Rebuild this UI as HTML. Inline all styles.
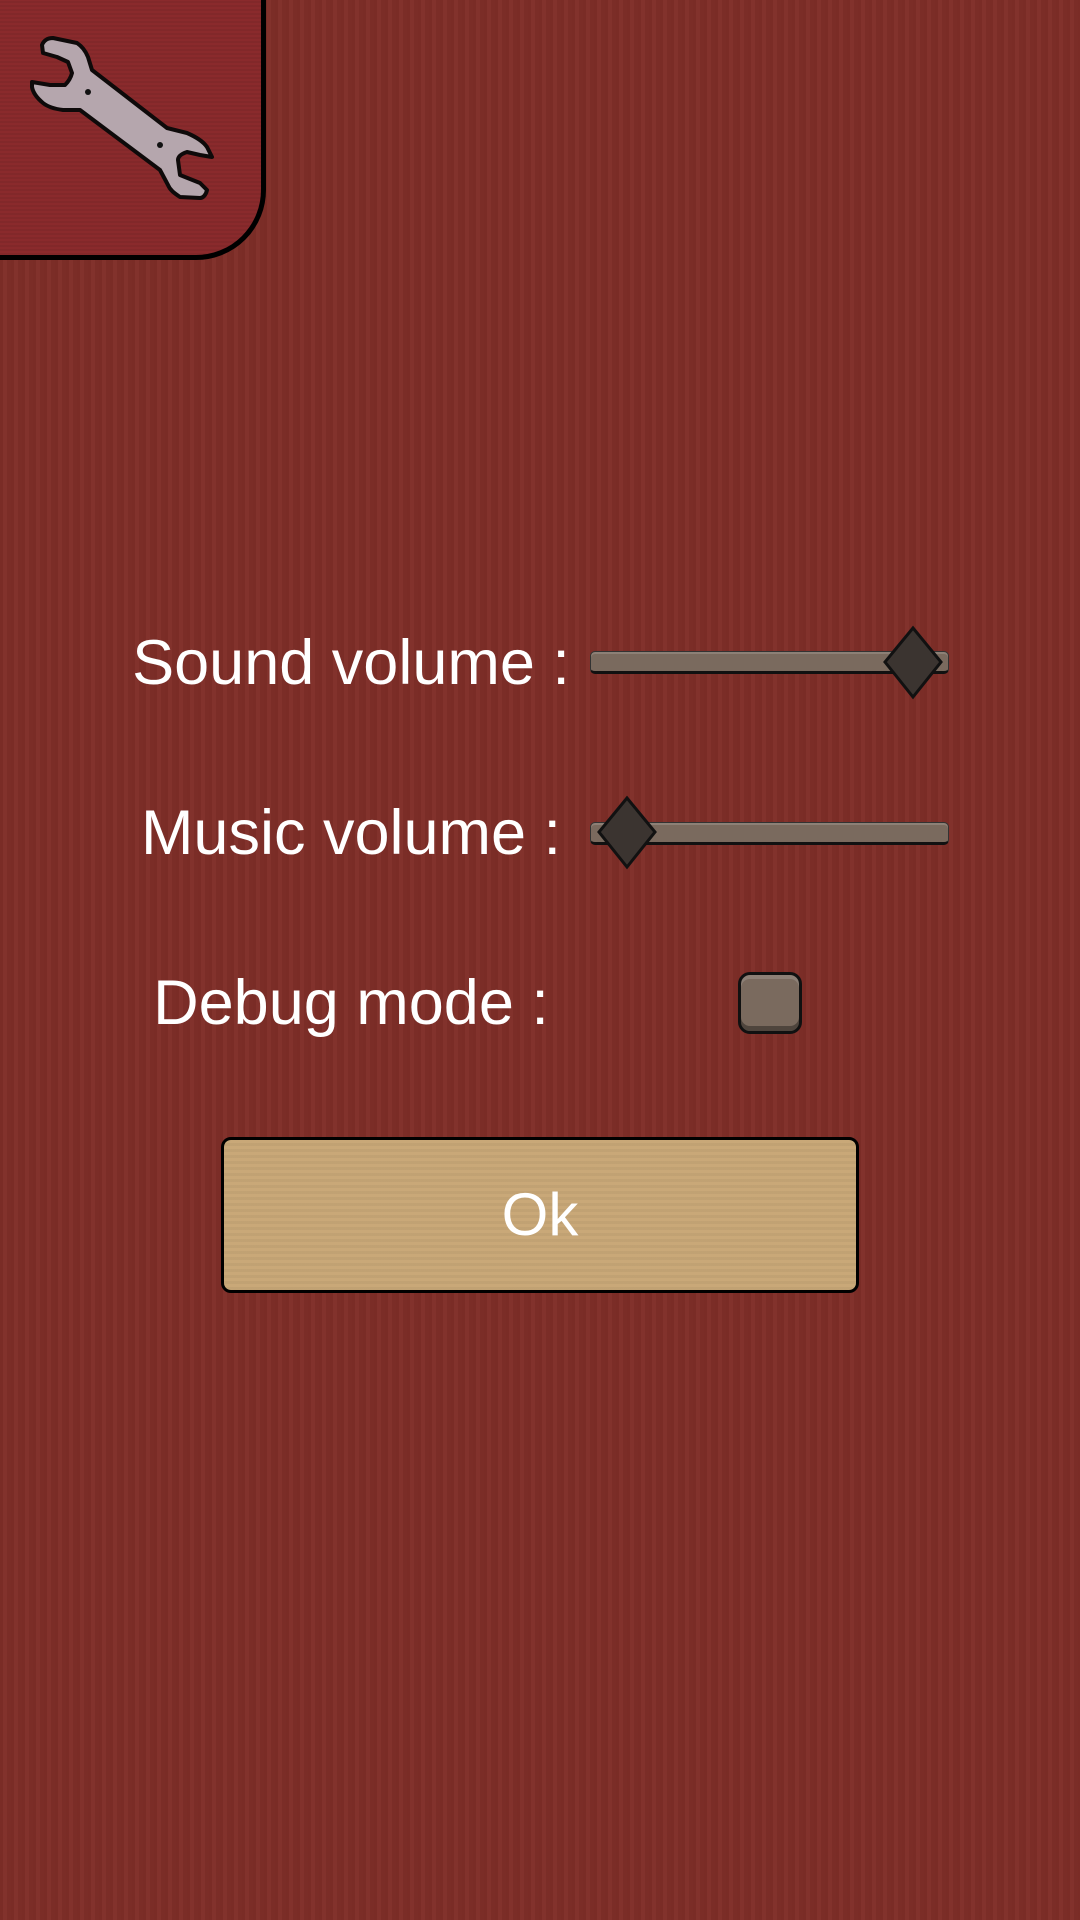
<!DOCTYPE html>
<html><head><meta charset="utf-8"><style>
html,body{margin:0;padding:0}
body{width:1080px;height:1920px;position:relative;overflow:hidden;background:#7f2e28;
background-image:repeating-linear-gradient(90deg,rgba(0,0,0,0.04) 0 3px,rgba(255,255,255,0.02) 3px 7px,rgba(0,0,0,0.03) 7px 11px);
font-family:"Liberation Sans",sans-serif;color:#fff}
.panel{position:absolute;left:-10px;top:-10px;width:266px;height:260px;background:#8a2a2c;
background-image:repeating-linear-gradient(0deg,rgba(0,0,0,0.06) 0 2px,transparent 2px 4px);
border:5px solid #000;border-bottom-right-radius:70px}
.lbl{position:absolute;font-size:63px;width:700px;left:1px;text-align:center;line-height:1}
.track{position:absolute;left:590px;width:357px;height:19px;background:#7a6a5e;border:1px solid #333;border-bottom:3px solid #111;border-radius:5px;box-shadow:inset 0 2px 0 rgba(255,255,255,0.15)}
.cb{position:absolute;left:738px;top:972px;width:58px;height:56px;background:#7a6a5e;border:3px solid #111;border-radius:12px;box-shadow:inset 0 4px 0 rgba(255,255,255,0.15),inset 0 -5px 0 rgba(0,0,0,0.35)}
.btn{position:absolute;left:221px;top:1137px;width:632px;height:150px;background:#c9a878;
background-image:repeating-linear-gradient(0deg,rgba(0,0,0,0.04) 0 3px,transparent 3px 6px);
border:3px solid #000;border-radius:10px;font-size:60px;text-align:center;line-height:150px}
</style></head><body>
<div class="panel"></div>
<svg style="position:absolute;left:0;top:0" width="260" height="220">
<path d="M42 45 C44 40 48 38 53 38 L77 43 C83 47 86 52 88 57 L92 70 L167 128 L187 133 C196 137 203 141 207 147 L212 157 L200 155 L187 152 C181 154 178 157 178 160 L180 175 L200 183 L207 190 C206 195 203 198 200 198 L180 197 C174 193 170 190 168 185 L160 170 L80 110 L63 110 C55 109 48 107 43 103 C37 98 33 93 32 87 L32 82 L50 85 L65 85 C69 81 71 77 72 73 L68 62 L57 57 L43 53 Z" fill="#b5a6ad" stroke="#0e0a0a" stroke-width="4" stroke-linejoin="round"/>
<circle cx="88" cy="92" r="3" fill="#111"/><circle cx="160" cy="145" r="3" fill="#111"/>
</svg>
<div class="lbl" style="top:632px">Sound volume :</div>
<div class="lbl" style="top:802px">Music volume :</div>
<div class="lbl" style="top:972px">Debug mode :</div>
<div class="track" style="top:651px"></div>
<div class="track" style="top:822px"></div>
<svg style="position:absolute;left:0;top:0" width="1080" height="1000">
<polygon points="913,628 941,662 913,697 885,662" fill="#3b3430" stroke="#111" stroke-width="3"/>
<polygon points="627,798 655,832 627,867 599,832" fill="#3b3430" stroke="#111" stroke-width="3"/>
</svg>
<div class="cb"></div>
<div class="btn">Ok</div>
</body></html>
